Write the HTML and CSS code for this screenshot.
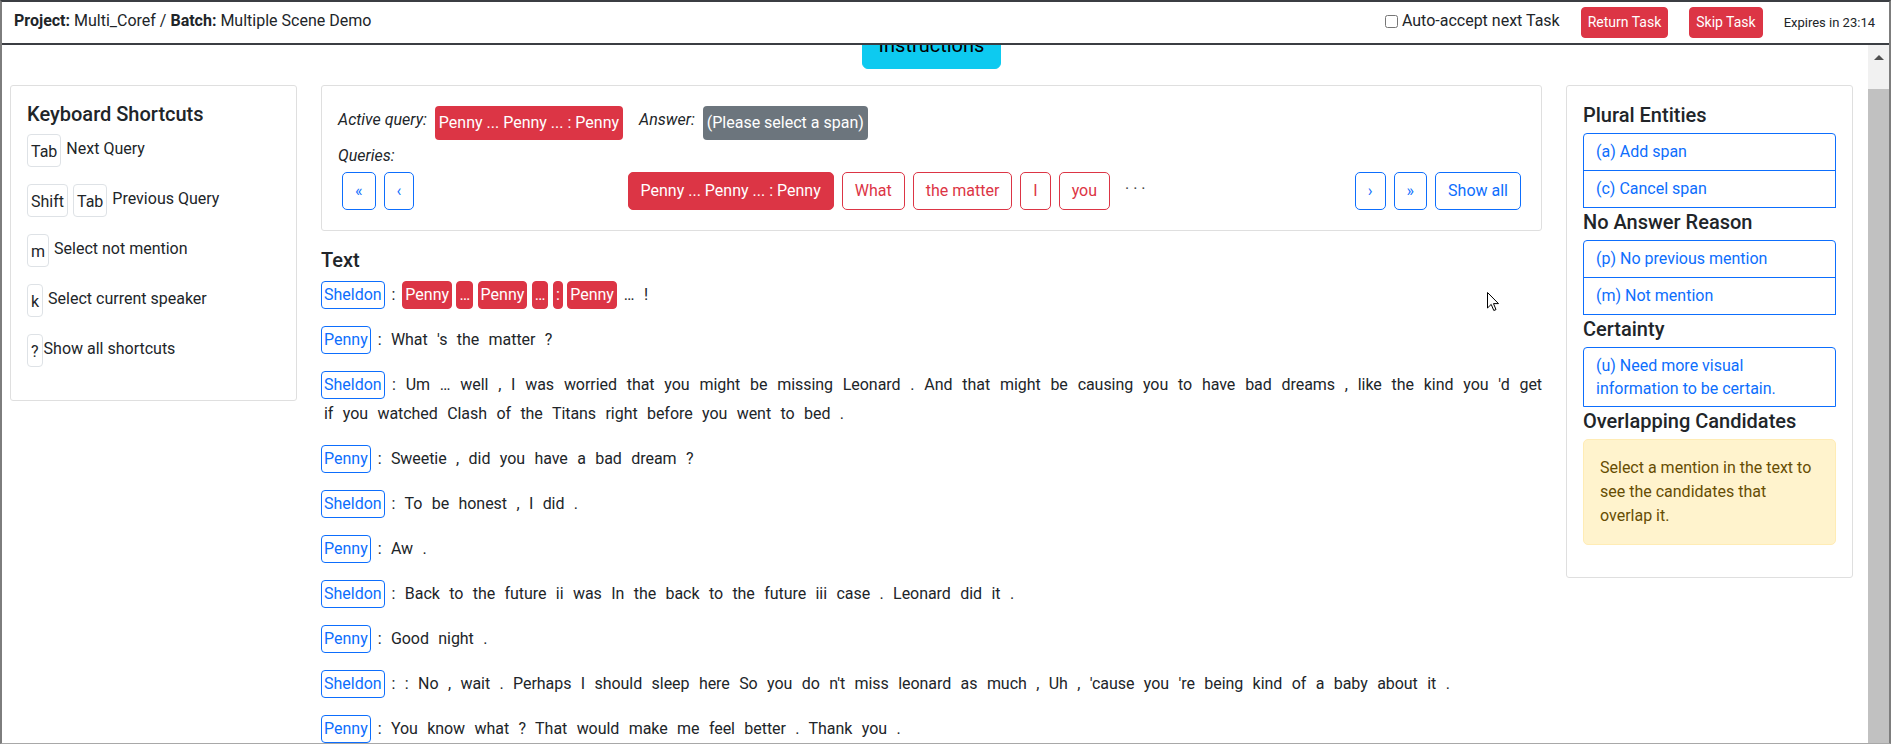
FILE: index.html
```html
<!DOCTYPE html>
<html lang="en">
<head>
<meta charset="utf-8">
<title>Multi_Coref</title>
<link rel="stylesheet" href="styles.css">
</head>
<body>
<div class="frame">
  <header class="navbar">
    <div class="nav-title"><b>Project:</b> Multi_Coref / <b>Batch:</b> Multiple Scene Demo</div>
    <div class="nav-right">
      <label class="auto"><input type="checkbox" class="chk"> Auto-accept next Task</label>
      <button class="btn-sm">Return Task</button>
      <button class="btn-sm">Skip Task</button>
      <span class="expires">Expires in 23:14</span>
    </div>
  </header>

  <div class="viewport">
    <main class="content">
      <div class="instr-row"><button class="instr">Instructions</button></div>

      <div class="cols">
        <aside class="card">
          <h5 class="h5">Keyboard Shortcuts</h5>
          <div class="sc"><span class="key">Tab</span><span class="sc-label">Next Query</span></div>
          <div class="sc"><span class="key">Shift</span><span class="key">Tab</span><span class="sc-label">Previous Query</span></div>
          <div class="sc"><span class="key">m</span><span class="sc-label">Select not mention</span></div>
          <div class="sc"><span class="key">k</span><span class="sc-label">Select current speaker</span></div>
          <div class="sc sc-tight"><span class="key">?</span><span class="sc-label">Show all shortcuts</span></div>
        </aside>

        <section class="center">
          <div class="card">
            <div class="q-top">
              <span class="q-label">Active query:</span>
              <span class="badge badge-red">Penny ... Penny ... : Penny</span>
              <span class="q-label q-answer">Answer:</span>
              <span class="badge badge-gray">(Please select a span)</span>
            </div>
            <div class="q-label q-queries">Queries:</div>
            <div class="qbtns">
              <div class="qgroup">
                <button class="btn btn-op">«</button>
                <button class="btn btn-op">‹</button>
              </div>
              <div class="qgroup">
                <button class="btn btn-d">Penny ... Penny ... : Penny</button>
                <button class="btn btn-od">What</button>
                <button class="btn btn-od">the matter</button>
                <button class="btn btn-od">I</button>
                <button class="btn btn-od">you</button>
                <span class="dots">· · ·</span>
              </div>
              <div class="qgroup">
                <button class="btn btn-op">›</button>
                <button class="btn btn-op">»</button>
                <button class="btn btn-op">Show all</button>
              </div>
            </div>
          </div>

          <h5 class="h5 text-title">Text</h5>
          <div class="doc">
            <p><span class="m sp">Sheldon</span> : <span class="m red">Penny</span> <span class="m red">…</span> <span class="m red">Penny</span> <span class="m red">…</span> <span class="m red">:</span> <span class="m red">Penny</span> … !</p>
            <p><span class="m sp">Penny</span> : What 's the matter ?</p>
            <p><span class="jline"><span class="m sp">Sheldon</span> : Um … well , I was worried that you might be missing Leonard . And that might be causing you to have bad dreams , like the kind you 'd get</span>if you watched Clash of the Titans right before you went to bed .</p>
            <p><span class="m sp">Penny</span> : Sweetie , did you have a bad dream ?</p>
            <p><span class="m sp">Sheldon</span> : To be honest , I did .</p>
            <p><span class="m sp">Penny</span> : Aw .</p>
            <p><span class="m sp">Sheldon</span> : Back to the future ii was In the back to the future iii case . Leonard did it .</p>
            <p><span class="m sp">Penny</span> : Good night .</p>
            <p><span class="m sp">Sheldon</span> : : No , wait . Perhaps I should sleep here So you do n't miss leonard as much , Uh , 'cause you 're being kind of a baby about it .</p>
            <p><span class="m sp">Penny</span> : You know what ? That would make me feel better . Thank you .</p>
            <p><span class="m sp">Sheldon</span> : You 're welcome .</p>
          </div>
        </section>

        <aside class="card">
          <h5 class="h5 side-h">Plural Entities</h5>
          <div class="vgroup">
            <button class="btn btn-op">(a) Add span</button>
            <button class="btn btn-op">(c) Cancel span</button>
          </div>
          <h5 class="h5 side-h">No Answer Reason</h5>
          <div class="vgroup">
            <button class="btn btn-op">(p) No previous mention</button>
            <button class="btn btn-op">(m) Not mention</button>
          </div>
          <h5 class="h5 side-h">Certainty</h5>
          <div class="vgroup">
            <button class="btn btn-op btn-two">(u) Need more visual information to be certain.</button>
          </div>
          <h5 class="h5 side-h">Overlapping Candidates</h5>
          <div class="alert">Select a mention in the text to<br>see the candidates that<br>overlap it.</div>
        </aside>
      </div>
    </main>

    <div class="scrollbar">
      <div class="sb-arrow"></div>
      <div class="sb-thumb"></div>
    </div>
  </div>

  <svg class="cursor" width="13" height="20" viewBox="0 0 13 20">
    <path d="M0.5 0.5 L0.5 16 L4.2 12.4 L6.8 18.5 L9 17.6 L6.5 11.6 L11.5 11.6 Z" fill="#fff" stroke="#000" stroke-width="1"/>
  </svg>
</div>
</body>
</html>
```

FILE: styles.css
```css
* { box-sizing: border-box; }

html, body {
  margin: 0;
  height: 100%;
  overflow: hidden;
}

body {
  font-family: Roboto, "Segoe UI", "Liberation Sans", sans-serif;
  font-size: 16px;
  line-height: 1.5;
  color: #212529;
  background: #fff;
}

button { font-family: inherit; cursor: pointer; }

.frame {
  position: relative;
  width: 1891px;
  height: 744px;
  border-top: 2px solid #3b3e43;
  border-left: 2px solid #7d7d7d;
  border-right: 2px solid #7d7d7d;
  border-bottom: 1px solid #a8a8a8;
  display: flex;
  flex-direction: column;
  overflow: hidden;
  background: #fff;
}

/* ---------- navbar ---------- */
.navbar {
  flex-shrink: 0;
  height: 43px;
  border-bottom: 2px solid #3b3e43;
  display: flex;
  align-items: center;
  justify-content: space-between;
  padding: 0 14px 0 12px;
}

.nav-title {
  font-size: 16px;
  margin-bottom: 3px;
}

.nav-title b { font-weight: 700; }

.nav-right {
  display: flex;
  align-items: center;
  gap: 21px;
}

.auto {
  display: flex;
  align-items: center;
  font-size: 16px;
  margin-bottom: 3px;
}

.chk {
  width: 13px;
  height: 13px;
  margin: 0 4px 0 0;
}

.btn-sm {
  font-size: 14px;
  line-height: 21px;
  padding: 4px 6px;
  border: 1px solid #dc3545;
  border-radius: 4px;
  background: #dc3545;
  color: #fff;
}

.expires {
  font-size: 13px;
}

/* ---------- viewport / scroll ---------- */
.viewport {
  flex: 1;
  display: flex;
  min-height: 0;
  overflow: hidden;
}

.content {
  flex: 1;
  min-width: 0;
  margin-top: -24px;
  padding: 0 15px 0 8px;
}

.scrollbar {
  width: 21px;
  flex-shrink: 0;
  background: #f1f1f1;
  display: flex;
  flex-direction: column;
  align-items: center;
}

.sb-arrow {
  margin-top: 10px;
  width: 0;
  height: 0;
  border-left: 5px solid transparent;
  border-right: 5px solid transparent;
  border-bottom: 5px solid #505050;
}

.sb-thumb {
  margin-top: 29px;
  align-self: stretch;
  flex: 1;
  background: #c1c1c1;
}

.cursor {
  position: absolute;
  left: 1485px;
  top: 290px;
}

/* ---------- instructions ---------- */
.instr-row {
  display: flex;
  justify-content: center;
  margin-bottom: 16px;
}

.instr {
  font-size: 20px;
  line-height: 30px;
  padding: 8px 16px;
  border: 1px solid #0dcaf0;
  border-radius: 6px;
  background: #0dcaf0;
  color: #000;
}

/* ---------- columns ---------- */
.cols {
  display: grid;
  grid-template-columns: 287px 1fr 287px;
  column-gap: 24px;
  align-items: start;
}

.card {
  border: 1px solid #dfdfdf;
  border-radius: 3px;
  padding: 16px;
  background: #fff;
}

.h5 {
  margin: 0 0 8px;
  font-size: 20px;
  font-weight: 500;
  line-height: 1.2;
}

/* shortcuts */
.sc {
  display: flex;
  align-items: flex-start;
  gap: 5px;
  margin-bottom: 17px;
}

.sc-tight { gap: 1px; }

.key {
  display: inline-block;
  border: 1px solid #dee2e6;
  border-radius: 4px;
  padding: 5px 3px 3px;
  line-height: 23px;
}

.sc-label {
  padding-top: 3px;
  line-height: 24px;
}

/* query card */
.q-top {
  display: flex;
  align-items: flex-start;
  margin-top: 4px;
}

.q-label {
  font-style: italic;
  padding-top: 2px;
  line-height: 24px;
  margin-right: 8px;
}

.q-answer { margin-left: 16px; }

.q-queries {
  margin-top: 4px;
  padding-top: 0;
}

.badge {
  display: inline-block;
  padding: 5px 4px;
  line-height: 24px;
  border-radius: 4px;
  color: #fff;
}

.badge-red { background: #dc3545; }
.badge-gray { background: #6c757d; }

.qbtns {
  display: flex;
  justify-content: space-between;
  align-items: center;
}

.qgroup {
  display: flex;
  align-items: center;
}

.btn {
  font-size: 16px;
  line-height: 24px;
  padding: 6px 12px;
  border: 1px solid transparent;
  border-radius: 5px;
  background: transparent;
  margin: 4px;
}

.btn-op { color: #0d6efd; border-color: #0d6efd; }
.btn-od { color: #dc3545; border-color: #dc3545; }
.btn-d { color: #fff; background: #dc3545; border-color: #dc3545; }

.dots {
  margin-left: 11px;
  padding-bottom: 4px;
  color: #444;
}

/* text */
.text-title {
  margin-top: 17px;
}

.doc p {
  margin: 0 0 16px;
  padding: 0 0 0 3px;
  line-height: 29px;
  text-align: justify;
  word-spacing: 5.5px;
  letter-spacing: -0.05px;
}

.jline {
  display: block;
  text-align-last: justify;
}

.m {
  display: inline-block;
  margin: 0 -2.5px;
  padding: 1px 2px;
  border: 1px solid transparent;
  border-radius: 4px;
  line-height: 24px;
  word-spacing: 0;
  letter-spacing: 0;
}

.doc p .m:first-child { margin-left: -3px; }

.sp { color: #0d6efd; border-color: #0d6efd; }
.red { color: #fff; background: #dc3545; border-color: #dc3545; }

/* right column */
.side-h { margin: 2px 0 6px; }
.side-h:first-child { margin-top: 1px; }

.vgroup {
  display: flex;
  flex-direction: column;
}

.vgroup .btn {
  margin: 0;
  text-align: left;
  border-radius: 0;
}

.vgroup .btn + .btn { margin-top: -1px; }
.vgroup .btn:first-child { border-top-left-radius: 4px; border-top-right-radius: 4px; }

.vgroup .btn-two {
  line-height: 23px;
  padding-top: 6px;
  padding-bottom: 6px;
}

.alert {
  background: #fff3cd;
  border: 1px solid #ffecb5;
  border-radius: 5px;
  color: #664d03;
  padding: 16px;
  margin-bottom: 16px;
}
```
